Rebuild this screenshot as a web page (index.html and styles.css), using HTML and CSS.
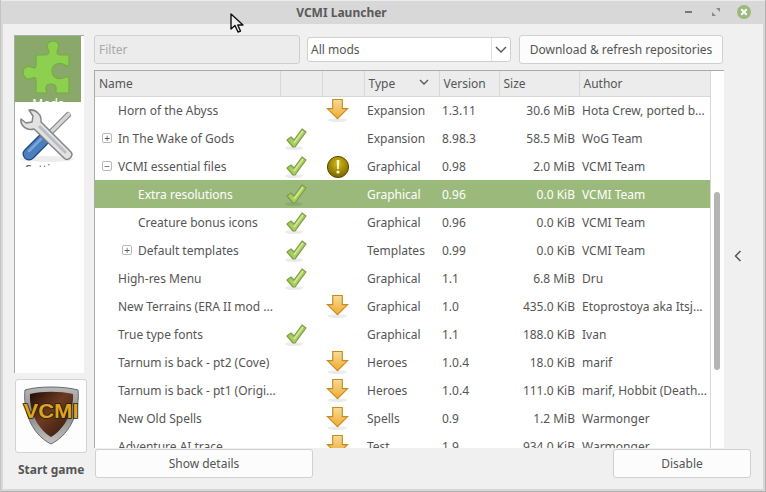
FILE: index.html
```html
<!DOCTYPE html>
<html lang="en">
<head>
  <meta charset="UTF-8">
  <title>VCMI Launcher</title>
  <link rel="stylesheet" href="styles.css">
</head>
<body>
  <svg class="defs" width="0" height="0">
    <defs>
      <linearGradient id="arrowFill" x1="0" y1="0" x2="0" y2="1">
        <stop offset="0" stop-color="#f7dc9a"/>
        <stop offset="1" stop-color="#f0a92e"/>
      </linearGradient>
      <radialGradient id="warnFill" cx="0.5" cy="0.35" r="0.7">
        <stop offset="0" stop-color="#d8bd10"/>
        <stop offset="1" stop-color="#6f5c00"/>
      </radialGradient>
      <linearGradient id="shieldFill" x1="0" y1="0" x2="1" y2="1">
        <stop offset="0" stop-color="#1f0d06"/>
        <stop offset="0.45" stop-color="#6d3a22"/>
        <stop offset="1" stop-color="#2c140a"/>
      </linearGradient>
      <linearGradient id="shieldEdge" x1="0" y1="0" x2="0" y2="1">
        <stop offset="0" stop-color="#b8b8b8"/>
        <stop offset="0.5" stop-color="#8a8a8a"/>
        <stop offset="1" stop-color="#c4c4c4"/>
      </linearGradient>
      <symbol id="check" viewBox="0 0 24 24">
        <ellipse cx="10" cy="21" rx="9" ry="2" fill="#000" opacity="0.08"/>
        <path d="M3 13 L7 10 L10 13 L18 2 L22 5 L11 20 L9 20 Z" fill="#a9cc62" stroke="#7c9f45" stroke-width="1.2" stroke-linejoin="round"/>
        <path d="M10 16 L19 4" stroke="#d5e89a" stroke-width="1.5" fill="none"/>
      </symbol>
      <symbol id="arrow" viewBox="0 0 24 26">
        <ellipse cx="12" cy="23" rx="10" ry="2" fill="#000" opacity="0.08"/>
        <path d="M7 1.5 H17 V11 H22.5 L12 21.5 L1.5 11 H7 Z" fill="url(#arrowFill)" stroke="#c98a1c" stroke-width="1.2"/>
      </symbol>
      <symbol id="warn" viewBox="0 0 24 24">
        <circle cx="12" cy="12" r="10.6" fill="url(#warnFill)" stroke="#5b4b00" stroke-width="1"/>
        <path d="M10.6 5 H13.4 L12.8 14 H11.2 Z" fill="#fff8d0"/>
        <circle cx="12" cy="17" r="1.6" fill="#fff8d0"/>
      </symbol>
    </defs>
  </svg>

  <div class="window">
    <header class="titlebar">
      <span class="title">VCMI Launcher</span>
      <div class="wm-buttons">
        <span class="wm-min"></span>
        <svg class="wm-max" width="10" height="10" viewBox="0 0 10 10">
          <path d="M5 1 H9 V5 Z M1 5 V9 H5 Z" fill="#8a8a8a"/>
        </svg>
        <svg class="wm-close" width="16" height="16" viewBox="0 0 16 16">
          <circle cx="8" cy="8" r="7" fill="#9bb97b"/>
          <path d="M5.3 5.3 L10.7 10.7 M10.7 5.3 L5.3 10.7" stroke="#fff" stroke-width="2"/>
        </svg>
      </div>
    </header>

    <div class="content">
      <aside class="sidebar">
        <div class="pages">
          <div class="page page-active">
            <svg class="page-icon" width="66" height="66" viewBox="15 36 66 66">
              <path d="M36 55 L45 55 C49 55 50 52 48 49 C45 44 50 41 53 41 C58 41 60 45 58 49 C56 52 57 55 60 55 L69 55 L69 64 C69 67 66 66 63 64 C58 62 52 65 52 71 C52 77 58 80 63 78 C66 77 69 76 69 79 L69 93 L58 93 C54 93 57 89 56 87 C54 83 47 83 46 87 C45 90 49 93 45 93 L36 93 L36 80 C36 76 33 78 30 79 C26 80 23 76 23 72 C23 68 27 65 31 67 C34 68 36 69 36 65 Z" fill="#8dd04f" stroke="#74ad40" stroke-width="1.2"/>
            </svg>
            <span class="page-label">Mods</span>
          </div>
          <div class="page">
            <svg class="page-icon" width="66" height="60" viewBox="15 102 66 60">
              <ellipse cx="47" cy="159" rx="27" ry="3" fill="#000" opacity="0.07"/>
              <path d="M68 115 L44 139" stroke="#8d8d8d" stroke-width="6" stroke-linecap="round"/>
              <path d="M69 114 L45 138" stroke="#d6d6d6" stroke-width="3.4" stroke-linecap="round"/>
              <path d="M43 140 L29 154" stroke="#1f4678" stroke-width="13" stroke-linecap="round"/>
              <path d="M43 140 L29 154" stroke="#4a7fbd" stroke-width="10.5" stroke-linecap="round"/>
              <path d="M41 139 L29 151" stroke="#7ba6d6" stroke-width="2.5" stroke-linecap="round"/>
              <path d="M21 119 L26 123 L32 122 L33 116 L29 110 C36 109 42 115 41 122 L71 152 C74 156 68 162 64 158 L34 129 C27 131 20 126 21 119 Z" fill="#e2e2e2" stroke="#858585" stroke-width="1.5" stroke-linejoin="round"/>
              <path d="M39 126 L66 153" stroke="#b7bfc7" stroke-width="3"/>
            </svg>
            <span class="page-label page-label-dark">Settings</span>
          </div>
        </div>
        <button class="start-btn">
          <svg width="66" height="66" viewBox="0 0 66 66">
            <path d="M7 7 C20 3 46 3 60 7 C62 24 55 50 33 61 C11 50 5 24 7 7 Z" fill="url(#shieldEdge)" stroke="#6a6a6a" stroke-width="1"/>
            <path d="M12 11 C24 8 42 8 55 11 C56 26 48 45 33 54 C18 45 11 26 12 11 Z" fill="url(#shieldFill)"/>
            <text class="logo-text" x="33" y="35" text-anchor="middle" textLength="55" lengthAdjust="spacingAndGlyphs">VCMI</text>
          </svg>
        </button>
        <span class="start-label">Start game</span>
      </aside>

      <main class="main">
        <div class="toolbar">
          <input class="filter" type="text" placeholder="Filter" disabled>
          <div class="combo">
            <span class="combo-text">All mods</span>
            <span class="combo-arrow">
              <svg width="12" height="8" viewBox="0 0 12 8"><path d="M1 1 L6 6 L11 1" fill="none" stroke="#555" stroke-width="1.4"/></svg>
            </span>
          </div>
          <button class="btn btn-refresh">Download &amp; refresh repositories</button>
        </div>

        <div class="middle">
          <div class="list">
            <div class="list-clip">
              <table class="mods">
                <colgroup>
                  <col class="c-name"><col class="c-state"><col class="c-state"><col class="c-type"><col class="c-ver"><col class="c-size"><col class="c-author">
                </colgroup>
                <thead>
                  <tr>
                    <th>Name</th><th></th><th></th>
                    <th class="type-head">Type
                      <svg class="sort" width="10" height="6" viewBox="0 0 10 6"><path d="M1 1 L5 5 L9 1" fill="none" stroke="#555" stroke-width="1.3"/></svg>
                    </th>
                    <th>Version</th><th>Size</th><th>Author</th>
                  </tr>
                </thead>
                <tbody>
                  <tr>
                    <td class="name lvl0">Horn of the Abyss</td>
                    <td></td>
                    <td class="icon"><svg class="ic-arrow"><use href="#arrow"/></svg></td>
                    <td>Expansion</td><td>1.3.11</td><td class="size">30.6 MiB</td><td>Hota Crew, ported b...</td>
                  </tr>
                  <tr>
                    <td class="name lvl0"><span class="exp">+</span>In The Wake of Gods</td>
                    <td class="icon"><svg class="ic-check"><use href="#check"/></svg></td>
                    <td></td>
                    <td>Expansion</td><td>8.98.3</td><td class="size">58.5 MiB</td><td>WoG Team</td>
                  </tr>
                  <tr>
                    <td class="name lvl0"><span class="exp">−</span>VCMI essential files</td>
                    <td class="icon"><svg class="ic-check"><use href="#check"/></svg></td>
                    <td class="icon"><svg class="ic-warn"><use href="#warn"/></svg></td>
                    <td>Graphical</td><td>0.98</td><td class="size">2.0 MiB</td><td>VCMI Team</td>
                  </tr>
                  <tr class="selected">
                    <td class="name lvl1">Extra resolutions</td>
                    <td class="icon"><svg class="ic-check"><use href="#check"/></svg></td>
                    <td></td>
                    <td>Graphical</td><td>0.96</td><td class="size">0.0 KiB</td><td>VCMI Team</td>
                  </tr>
                  <tr>
                    <td class="name lvl1">Creature bonus icons</td>
                    <td class="icon"><svg class="ic-check"><use href="#check"/></svg></td>
                    <td></td>
                    <td>Graphical</td><td>0.96</td><td class="size">0.0 KiB</td><td>VCMI Team</td>
                  </tr>
                  <tr>
                    <td class="name lvl1"><span class="exp">+</span>Default templates</td>
                    <td class="icon"><svg class="ic-check"><use href="#check"/></svg></td>
                    <td></td>
                    <td>Templates</td><td>0.99</td><td class="size">0.0 KiB</td><td>VCMI Team</td>
                  </tr>
                  <tr>
                    <td class="name lvl0">High-res Menu</td>
                    <td class="icon"><svg class="ic-check"><use href="#check"/></svg></td>
                    <td></td>
                    <td>Graphical</td><td>1.1</td><td class="size">6.8 MiB</td><td>Dru</td>
                  </tr>
                  <tr>
                    <td class="name lvl0">New Terrains (ERA II mod ...</td>
                    <td></td>
                    <td class="icon"><svg class="ic-arrow"><use href="#arrow"/></svg></td>
                    <td>Graphical</td><td>1.0</td><td class="size">435.0 KiB</td><td>Etoprostoya aka Itsj...</td>
                  </tr>
                  <tr>
                    <td class="name lvl0">True type fonts</td>
                    <td class="icon"><svg class="ic-check"><use href="#check"/></svg></td>
                    <td></td>
                    <td>Graphical</td><td>1.1</td><td class="size">188.0 KiB</td><td>Ivan</td>
                  </tr>
                  <tr>
                    <td class="name lvl0">Tarnum is back - pt2 (Cove)</td>
                    <td></td>
                    <td class="icon"><svg class="ic-arrow"><use href="#arrow"/></svg></td>
                    <td>Heroes</td><td>1.0.4</td><td class="size">18.0 KiB</td><td>marif</td>
                  </tr>
                  <tr>
                    <td class="name lvl0">Tarnum is back - pt1 (Origi...</td>
                    <td></td>
                    <td class="icon"><svg class="ic-arrow"><use href="#arrow"/></svg></td>
                    <td>Heroes</td><td>1.0.4</td><td class="size">111.0 KiB</td><td>marif, Hobbit (Death...</td>
                  </tr>
                  <tr>
                    <td class="name lvl0">New Old Spells</td>
                    <td></td>
                    <td class="icon"><svg class="ic-arrow"><use href="#arrow"/></svg></td>
                    <td>Spells</td><td>0.9</td><td class="size">1.2 MiB</td><td>Warmonger</td>
                  </tr>
                  <tr>
                    <td class="name lvl0">Adventure AI trace</td>
                    <td></td>
                    <td class="icon"><svg class="ic-arrow"><use href="#arrow"/></svg></td>
                    <td>Test</td><td>1.9</td><td class="size">934.0 KiB</td><td>Warmonger</td>
                  </tr>
                </tbody>
              </table>
            </div>
            <div class="scrollbar"><div class="thumb"></div></div>
          </div>
          <div class="side-toggle">
            <svg width="8" height="12" viewBox="0 0 8 12"><path d="M6.5 1 L1.5 6 L6.5 11" fill="none" stroke="#555" stroke-width="1.5"/></svg>
          </div>
        </div>

        <div class="bottom">
          <button class="btn btn-details">Show details</button>
          <button class="btn btn-disable">Disable</button>
        </div>
      </main>
    </div>

    <svg class="cursor" width="16" height="21" viewBox="0 0 16 21">
      <path d="M1 1 L1 16 L5 12.5 L8 19 L10.5 18 L7.8 12 L13 12 Z" fill="#eee" stroke="#111" stroke-width="1.4" stroke-linejoin="round"/>
    </svg>
  </div>
</body>
</html>
```

FILE: styles.css
```css
html, body {
  margin: 0;
  padding: 0;
}
body {
  width: 766px;
  height: 492px;
  overflow: hidden;
  background: #d8d8d8;
  box-shadow: inset 1px 0 #c4c4c4, inset -1px -1px #b0b0b0, inset 0 1px #ececec;
  font-family: "Noto Sans", sans-serif;
  font-size: 12px;
  color: #555;
}
.defs {
  display: block;
  height: 0;
}
.window {
  position: relative;
  box-sizing: border-box;
  width: 760px;
  height: 488px;
  margin: 1px 0 0 3px;
  display: flex;
  flex-direction: column;
  background: #f0f0f0;
}
.titlebar {
  height: 23px;
  flex: none;
  display: flex;
  align-items: center;
  justify-content: center;
  background: #d8d8d8;
  position: relative;
}
.title {
  font-weight: bold;
  margin-right: 83px;
  color: #5a5a5a;
}
.wm-buttons {
  position: absolute;
  right: 11px;
  top: 3px;
  display: flex;
  align-items: center;
  gap: 19px;
}
.wm-close {
  margin-left: -4px;
}
.wm-min {
  width: 7px;
  height: 2px;
  background: #777;
}
.content {
  flex: 1;
  min-height: 0;
  display: flex;
  padding: 11px 12px 11px 11px;
}
.sidebar {
  width: 74px;
  flex: none;
  display: flex;
  flex-direction: column;
  margin-right: 7px;
}
.pages {
  box-sizing: border-box;
  width: 70px;
  height: 338px;
  background: #fff;
  border-top: 1px solid #aaa;
  border-left: 1px solid #aaa;
  flex: none;
}
.page {
  width: 66px;
  height: 65px;
  overflow: hidden;
  display: flex;
  flex-direction: column;
  align-items: center;
}
.page-active {
  width: 66px;
  height: 66px;
  background: #8aa86a;
}
.page-icon {
  flex: none;
}
.page-active .page-label {
  margin-top: -7px;
  color: #fff;
}
.page-label-dark {
  margin-top: -1px;
}
.start-btn {
  box-sizing: border-box;
  width: 72px;
  height: 76px;
  margin: 6px 0 0 1px;
  padding: 0;
  background: #fcfdfc;
  border: 1px solid #d2d2d2;
  border-radius: 3px;
  display: flex;
  align-items: center;
  justify-content: center;
}
.logo-text {
  font-family: "Liberation Sans", sans-serif;
  font-size: 20px;
  font-weight: bold;
  fill: #dba520;
  stroke: #2a1a05;
  stroke-width: 1.6px;
  paint-order: stroke;
}
.start-label {
  margin: 8px 0 0 4px;
  font-weight: bold;
  white-space: nowrap;
}
.main {
  flex: 1;
  min-width: 0;
  display: flex;
  flex-direction: column;
}
.toolbar {
  height: 29px;
  flex: none;
  display: flex;
  align-items: center;
  margin-right: 28px;
  margin-left: -1px;
}
.filter {
  box-sizing: border-box;
  width: 206px;
  height: 29px;
  padding: 0 4px;
  background: #ececec;
  border: 1px solid #cfcfcf;
  border-radius: 3px;
  font: inherit;
}
.filter::placeholder {
  color: #a8a8a8;
}
.combo {
  box-sizing: border-box;
  width: 204px;
  height: 25px;
  margin-left: 7px;
  display: flex;
  align-items: center;
  justify-content: space-between;
  background: #fff;
  border: 1px solid #cfcfcf;
  border-radius: 3px;
}
.combo-text {
  padding-left: 3px;
}
.combo-arrow {
  width: 18px;
  height: 100%;
  display: flex;
  align-items: center;
  justify-content: center;
  border-left: 1px solid #e0e0e0;
}
.btn {
  box-sizing: border-box;
  height: 29px;
  padding: 0;
  background: #fbfcfb;
  border: 1px solid #d0d0d0;
  border-radius: 3px;
  font: inherit;
  color: #555;
}
.btn-refresh {
  width: 204px;
  margin-left: 8px;
}
.middle {
  flex: 1;
  min-height: 0;
  display: flex;
  margin-top: 6px;
}
.list {
  box-sizing: border-box;
  width: 630px;
  height: 378px;
  margin-left: -1px;
  display: flex;
  background: #fff;
  border-top: 1px solid #aaa;
}
.list-clip {
  box-sizing: border-box;
  width: 617px;
  overflow: hidden;
  border-left: 1px solid #aaa;
  border-right: 1px solid #d8d8d8;
}
.mods {
  width: 615px;
  table-layout: fixed;
  border-collapse: collapse;
}
.c-name { width: 185px; }
.c-state { width: 42px; }
.c-type { width: 75px; }
.c-ver { width: 60px; }
.c-size { width: 80px; }
.c-author { width: 131px; }
th {
  height: 25px;
  padding: 0 0 0 4px;
  box-sizing: border-box;
  background: #ececec;
  border-right: 1px solid #d8d8d8;
  border-bottom: 1px solid #d8d8d8;
  font-weight: normal;
  text-align: left;
  white-space: nowrap;
}
th:last-child {
  border-right: none;
}
.type-head {
  position: relative;
}
.sort {
  position: absolute;
  right: 10px;
  top: 8px;
}
td {
  height: 28px;
  padding: 0 0 0 3px;
  box-sizing: border-box;
  white-space: nowrap;
  overflow: hidden;
}
td.icon {
  padding: 1px 0 0 4px;
  line-height: 0;
}
td.size {
  padding: 0 4px 0 0;
  text-align: right;
}
td.name {
  padding-left: 23px;
  position: relative;
}
td.lvl1 {
  padding-left: 43px;
}
.exp {
  position: absolute;
  box-sizing: border-box;
  left: 7px;
  top: 9px;
  width: 10px;
  height: 10px;
  border: 1px solid #b8b8b8;
  border-radius: 2px;
  font-size: 10px;
  line-height: 8px;
  text-align: center;
}
.lvl1 .exp {
  left: 27px;
}
.selected td {
  background: #9bb97b;
  color: #fff;
}
.ic-check {
  width: 24px;
  height: 24px;
}
.ic-arrow {
  width: 23px;
  height: 25px;
}
.ic-warn {
  width: 24px;
  height: 24px;
}
.scrollbar {
  box-sizing: border-box;
  width: 13px;
  flex: none;
  background: #fff;
  padding: 121px 0 0 3px;
}
.thumb {
  width: 6px;
  height: 178px;
  border-radius: 3px;
  background: #b4b4b4;
}
.side-toggle {
  flex: 1;
  display: flex;
  align-items: center;
  justify-content: center;
  padding-bottom: 7px;
}
.bottom {
  height: 29px;
  flex: none;
  display: flex;
  justify-content: space-between;
}
.btn-details {
  width: 218px;
}
.btn-disable {
  width: 138px;
}
.cursor {
  position: absolute;
  left: 227px;
  top: 12px;
}
```
